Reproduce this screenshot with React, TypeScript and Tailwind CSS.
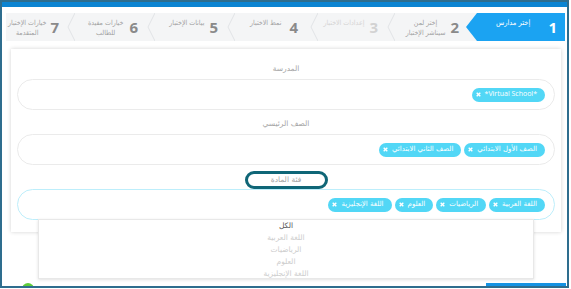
import React from "react";

const AR = "font-['DejaVu_Sans',sans-serif]";
const AR_NARROW = "font-['DejaVu_Sans_Condensed','DejaVu_Sans',sans-serif]";

type Step = {
  n: number;
  lines: string[];
  w: string;
  pad: string;
  active?: boolean;
  muted?: boolean;
  sep?: boolean;
};

const STEPS: Step[] = [
  { n: 1, lines: ["إختر مدارس"], w: "w-[99px]", pad: "pr-[8px] gap-[18px]", active: true },
  { n: 2, lines: ["إختر لمن", "سيناشر الإختبار"], w: "w-[79px]", pad: "pr-[7px] gap-[5px]", sep: true },
  { n: 3, lines: ["إعدادات الاختبار"], w: "w-[75px]", pad: "pr-[9px] gap-[5px]", muted: true, sep: true },
  { n: 4, lines: ["نمط الاختبار"], w: "w-[85px]", pad: "pr-[14px] gap-[8px]", sep: true },
  { n: 5, lines: ["بيانات الإختبار"], w: "w-[80px]", pad: "pr-[9px] gap-[5px]", sep: true },
  { n: 6, lines: ["خيارات مفيدة", "للطالب"], w: "w-[80px]", pad: "pr-[9px] gap-[6px]", sep: true },
  { n: 7, lines: ["خيارات الإختبار", "المتقدمة"], w: "w-[61px]", pad: "pr-[8px] gap-[4px]" },
];

function Chevron() {
  return (
    <svg width="8" height="28" viewBox="0 0 8 28" className="ms-auto shrink-0">
      <polyline points="8,0 1,14 8,28" fill="none" stroke="#e1e3e6" strokeWidth="1" />
    </svg>
  );
}

function StepItem({ s }: { s: Step }) {
  const numColor = s.active ? "text-white" : s.muted ? "text-[#d2d2d2]" : "text-[#8a8a8a]";
  const txtColor = s.active ? "text-white" : s.muted ? "text-[#d4d4d4]" : "text-[#a2a2a2]";
  return (
    <div
      className={`${s.w} h-[28px] shrink-0 flex ${s.pad} ${
        s.active ? "bg-[#1ba3f2] [clip-path:polygon(11px_0,100%_0,100%_100%,11px_100%,0_50%)]" : ""
      }`}
    >
      <span className={`font-['Open_Sans',sans-serif] font-bold text-[15px] leading-[28px] ${numColor}`}>{s.n}</span>
      <div
        className={`${AR_NARROW} mt-[5px] ${s.active ? "text-[7.5px]" : "text-[7px]"} leading-[10px] text-center whitespace-nowrap ${txtColor}`}
      >
        {s.lines.map((l) => (
          <div key={l}>{l}</div>
        ))}
      </div>
      {s.sep && <Chevron />}
    </div>
  );
}

function Chip({ label, ltr }: { label: string; ltr?: boolean }) {
  return (
    <span
      dir="rtl"
      className="flex items-center h-[14px] rounded-full bg-[#52d7f6] pr-[8px] pl-[4px] gap-[4px] text-white text-[7px] whitespace-nowrap"
    >
      <span dir={ltr ? "ltr" : "rtl"} className={ltr ? "font-['Open_Sans',sans-serif]" : AR}>
        {label}
      </span>
      <svg width="5" height="5" viewBox="0 0 5 5">
        <path d="M0.7 0.7 L4.3 4.3 M4.3 0.7 L0.7 4.3" stroke="#ffffff" strokeWidth="1.4" />
      </svg>
    </span>
  );
}

function Field({ chips, focused, ltr }: { chips: string[]; focused?: boolean; ltr?: boolean }) {
  return (
    <div
      dir="rtl"
      className={`relative h-[31px] rounded-[16px] border flex items-center gap-[3px] pr-[9px] ${
        focused ? "border-[#bdeefb]" : "border-[#ebebeb]"
      }`}
    >
      {chips.map((c) => (
        <Chip key={c} label={c} ltr={ltr} />
      ))}
      {focused && (
        <div
          className={`${AR} absolute top-full left-[20px] right-[20px] h-[60px] bg-white border border-[#e8e8e8] shadow-[0_1px_3px_rgba(0,0,0,0.12)] text-center text-[7.5px] leading-[12px] z-10`}
        >
          <div className="text-[#555555]">الكل</div>
          <div className="text-[#cdcdcd]">اللغة العربية</div>
          <div className="text-[#cdcdcd]">الرياضيات</div>
          <div className="text-[#cdcdcd]">العلوم</div>
          <div className="text-[#cdcdcd]">اللغة الإنجليزية</div>
        </div>
      )}
    </div>
  );
}

function Label({ text }: { text: string }) {
  return (
    <div className={`${AR} h-[24px] pt-[4px] flex items-center justify-center text-[7.5px] text-[#a5a5a5]`}>
      {text}
    </div>
  );
}

export default function App() {
  return (
    <div className="w-[569px] h-[288px] border-2 border-[#2e6d8e] bg-white overflow-hidden flex flex-col">
      <div className="h-[5px] bg-[#0b84d2] shrink-0" />

      <div dir="rtl" className="mt-[6px] ml-[4px] mr-[2px] h-[28px] flex bg-[#f4f5f6] shrink-0">
        {STEPS.map((s) => (
          <StepItem key={s.n} s={s} />
        ))}
      </div>

      <div className="mt-[8px] ml-[9px] mr-[6px] bg-white shadow-[0_0_4px_rgba(0,0,0,0.18)] px-[6px] pt-[6px] pb-[12px] shrink-0">
        <Label text="المدرسة" />
        <Field chips={["*Virtual School*"]} ltr />
        <Label text="الصف الرئيسي" />
        <Field chips={["الصف الأول الابتدائي", "الصف الثاني الابتدائي"]} />
        <div className="h-[24px] flex items-end justify-center">
          <div
            className={`${AR} w-[83px] h-[18px] border-[3px] border-[#0f6677] rounded-full flex items-center justify-center text-[7.5px] text-[#a5a5a5]`}
          >
            فئة المادة
          </div>
        </div>
        <Field focused chips={["اللغة العربية", "الرياضيات", "العلوم", "اللغة الإنجليزية"]} />
      </div>

      <div className="mt-[51px] flex justify-between items-start shrink-0">
        <div className="ml-[20px] w-[12px] h-[12px] rounded-full bg-[#5fcc3a]" />
        <div className="mr-[1px] w-[80px] h-[12px] bg-[#1592e2]" />
      </div>
    </div>
  );
}
